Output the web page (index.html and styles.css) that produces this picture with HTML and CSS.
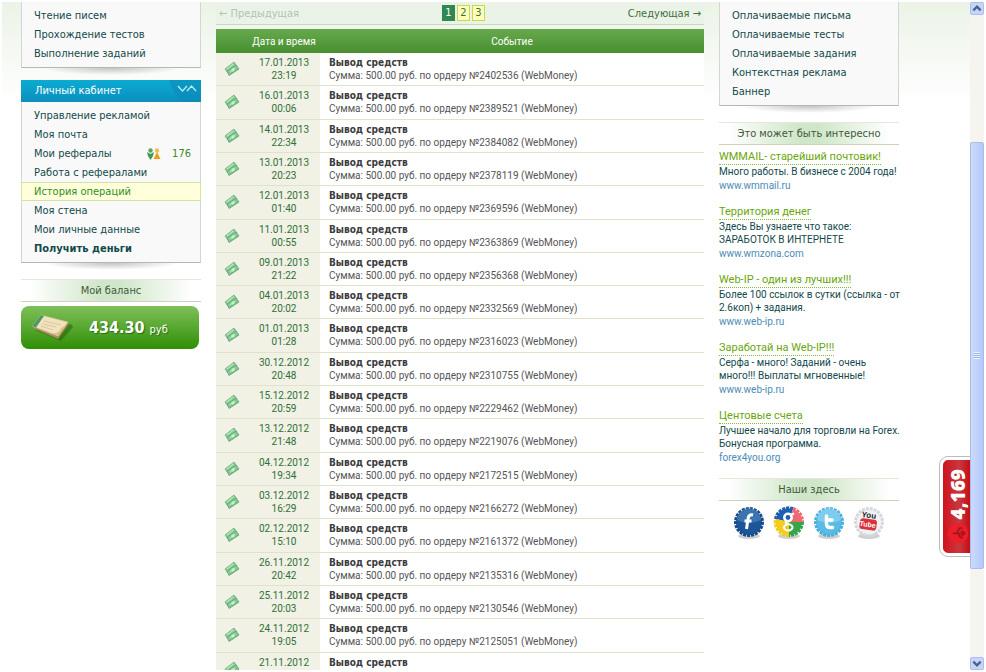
FILE: index.html
```
<!DOCTYPE html>
<html lang="ru">
<head>
    <meta charset="UTF-8">
    <meta name="viewport" content="width=device-width, initial-scale=1.0">
    <title>История операций</title>
    <link rel="stylesheet" href="styles.css">
</head>
<body>
    <svg class="sprite" aria-hidden="true">
        <symbol id="money" viewBox="0 0 16 16">
            <path d="M1 8 L10 1 L13 5 L4 12 Z" fill="#8fd09b" stroke="#6aae7a" stroke-width=".8"/>
            <path d="M3 10 L12 4 L15 8 L5 14.500 Z" fill="#86ca93" stroke="#5c9f6c" stroke-width=".8"/>
            <path d="M3 8 L9 3 M6 11 L11 7" stroke="#c6edca" stroke-width="1"/>
            <circle cx="9" cy="9" r="1.700" fill="#c9efcb"/>
            <path d="M6 13 L14 8" stroke="#6db47e" stroke-width=".8"/>
        </symbol>
    </svg>
    <div class="window">
        <div class="page">
            <nav class="column">
                <ul class="menu">
                    <li><a href="#">Чтение писем</a></li>
                    <li><a href="#">Прохождение тестов</a></li>
                    <li><a href="#">Выполнение заданий</a></li>
                </ul>
                <h2 class="menu-title">Личный кабинет
                    <svg class="menu-arrows" viewBox="0 0 32 22">
                        <path d="M0 0 H32 V22 H16 Q4 16 0 0 Z" fill="#0a87b4" opacity=".5"/>
                        <path d="M9 6 L13.500 11 L18 6 M18 11 L22.500 6 L27 11" fill="none" stroke="#b9ecf8" stroke-width="1.300"/>
                    </svg>
                </h2>
                <ul class="menu">
                    <li><a href="#">Управление рекламой</a></li>
                    <li><a href="#">Моя почта</a></li>
                    <li><a href="#">Мои рефералы</a>
                        <span class="referrals">
                            <svg viewBox="0 0 14 12" width="14" height="12">
                                <circle cx="3.500" cy="2.500" r="2.200" fill="#58a765"/>
                                <path d="M0 4 L3.500 6 L7 4 L6 8 L3.500 12 L1 8 Z" fill="#3e9a55"/>
                                <circle cx="10" cy="2.500" r="2.200" fill="#f3bd55"/>
                                <path d="M10 4 L13.500 11 H6.500 Z" fill="#f39a1d"/>
                            </svg>
                            176
                        </span>
                    </li>
                    <li><a href="#">Работа с рефералами</a></li>
                    <li class="active"><a href="#">История операций</a></li>
                    <li><a href="#">Моя стена</a></li>
                    <li><a href="#">Мои личные данные</a></li>
                    <li><a href="#"><b>Получить деньги</b></a></li>
                </ul>
                <h3 class="heading">Мой баланс</h3>
                <div class="balance">
                    <svg viewBox="0 0 42 30" width="42" height="30">
                        <path d="M4 17 L30 28 L42 14 L40 11 Z" fill="#235c08" opacity=".5"/>
                        <path d="M2 15 L27 26 L37 12 L37 9 L12 3 Z" fill="#a98f5c"/>
                        <path d="M1 13 L27 23 L37 9 L10 2 Z" fill="#efe2bd" stroke="#cfbd8a" stroke-width=".6"/>
                        <path d="M1 13 L5 14.500 L13 3 L10 2 Z" fill="#4c9b62"/>
                        <path d="M13 8 L30 12 M12 11 L25 14 M10 13 L22 17" stroke="#cdbd93" stroke-width=".7"/>
                        <path d="M21 20.500 Q29 20 30 15 L35 12 L27 23 Z" fill="#d9c289"/>
                    </svg>
                    <span class="sum">434.30 <small>руб</small></span>
                </div>
            </nav>

            <main>
                <div class="pager">
                    <span class="prev">← Предыдущая</span>
                    <div class="pages">
                        <a class="current" href="#">1</a>
                        <a href="#">2</a>
                        <a href="#">3</a>
                    </div>
                    <a href="#">Следующая →</a>
                </div>
                <table class="history">
                    <thead>
                        <tr><th class="icon"></th><th class="date">Дата и время</th><th>Событие</th></tr>
                    </thead>
                    <tbody>
                        <tr><td class="icon"><svg><use href="#money"/></svg></td><td class="date">17.01.2013<br>23:19</td><td class="event"><b>Вывод средств</b><br>Сумма: 500.00 руб. по ордеру №2402536 (WebMoney)</td></tr>
                        <tr><td class="icon"><svg><use href="#money"/></svg></td><td class="date">16.01.2013<br>00:06</td><td class="event"><b>Вывод средств</b><br>Сумма: 500.00 руб. по ордеру №2389521 (WebMoney)</td></tr>
                        <tr><td class="icon"><svg><use href="#money"/></svg></td><td class="date">14.01.2013<br>22:34</td><td class="event"><b>Вывод средств</b><br>Сумма: 500.00 руб. по ордеру №2384082 (WebMoney)</td></tr>
                        <tr><td class="icon"><svg><use href="#money"/></svg></td><td class="date">13.01.2013<br>20:23</td><td class="event"><b>Вывод средств</b><br>Сумма: 500.00 руб. по ордеру №2378119 (WebMoney)</td></tr>
                        <tr><td class="icon"><svg><use href="#money"/></svg></td><td class="date">12.01.2013<br>01:40</td><td class="event"><b>Вывод средств</b><br>Сумма: 500.00 руб. по ордеру №2369596 (WebMoney)</td></tr>
                        <tr><td class="icon"><svg><use href="#money"/></svg></td><td class="date">11.01.2013<br>00:55</td><td class="event"><b>Вывод средств</b><br>Сумма: 500.00 руб. по ордеру №2363869 (WebMoney)</td></tr>
                        <tr><td class="icon"><svg><use href="#money"/></svg></td><td class="date">09.01.2013<br>21:22</td><td class="event"><b>Вывод средств</b><br>Сумма: 500.00 руб. по ордеру №2356368 (WebMoney)</td></tr>
                        <tr><td class="icon"><svg><use href="#money"/></svg></td><td class="date">04.01.2013<br>20:02</td><td class="event"><b>Вывод средств</b><br>Сумма: 500.00 руб. по ордеру №2332569 (WebMoney)</td></tr>
                        <tr><td class="icon"><svg><use href="#money"/></svg></td><td class="date">01.01.2013<br>01:28</td><td class="event"><b>Вывод средств</b><br>Сумма: 500.00 руб. по ордеру №2316023 (WebMoney)</td></tr>
                        <tr><td class="icon"><svg><use href="#money"/></svg></td><td class="date">30.12.2012<br>20:48</td><td class="event"><b>Вывод средств</b><br>Сумма: 500.00 руб. по ордеру №2310755 (WebMoney)</td></tr>
                        <tr><td class="icon"><svg><use href="#money"/></svg></td><td class="date">15.12.2012<br>20:59</td><td class="event"><b>Вывод средств</b><br>Сумма: 500.00 руб. по ордеру №2229462 (WebMoney)</td></tr>
                        <tr><td class="icon"><svg><use href="#money"/></svg></td><td class="date">13.12.2012<br>21:48</td><td class="event"><b>Вывод средств</b><br>Сумма: 500.00 руб. по ордеру №2219076 (WebMoney)</td></tr>
                        <tr><td class="icon"><svg><use href="#money"/></svg></td><td class="date">04.12.2012<br>19:34</td><td class="event"><b>Вывод средств</b><br>Сумма: 500.00 руб. по ордеру №2172515 (WebMoney)</td></tr>
                        <tr><td class="icon"><svg><use href="#money"/></svg></td><td class="date">03.12.2012<br>16:29</td><td class="event"><b>Вывод средств</b><br>Сумма: 500.00 руб. по ордеру №2166272 (WebMoney)</td></tr>
                        <tr><td class="icon"><svg><use href="#money"/></svg></td><td class="date">02.12.2012<br>15:10</td><td class="event"><b>Вывод средств</b><br>Сумма: 500.00 руб. по ордеру №2161372 (WebMoney)</td></tr>
                        <tr><td class="icon"><svg><use href="#money"/></svg></td><td class="date">26.11.2012<br>20:42</td><td class="event"><b>Вывод средств</b><br>Сумма: 500.00 руб. по ордеру №2135316 (WebMoney)</td></tr>
                        <tr><td class="icon"><svg><use href="#money"/></svg></td><td class="date">25.11.2012<br>20:03</td><td class="event"><b>Вывод средств</b><br>Сумма: 500.00 руб. по ордеру №2130546 (WebMoney)</td></tr>
                        <tr><td class="icon"><svg><use href="#money"/></svg></td><td class="date">24.11.2012<br>19:05</td><td class="event"><b>Вывод средств</b><br>Сумма: 500.00 руб. по ордеру №2125051 (WebMoney)</td></tr>
                        <tr><td class="icon"><svg><use href="#money"/></svg></td><td class="date">21.11.2012</td><td class="event"><b>Вывод средств</b></td></tr>
                    </tbody>
                </table>
            </main>

            <aside class="column">
                <ul class="menu">
                    <li><a href="#">Оплачиваемые письма</a></li>
                    <li><a href="#">Оплачиваемые тесты</a></li>
                    <li><a href="#">Оплачиваемые задания</a></li>
                    <li><a href="#">Контекстная реклама</a></li>
                    <li><a href="#">Баннер</a></li>
                </ul>
                <h3 class="heading">Это может быть интересно</h3>
                <div class="ads">
                    <div class="ad">
                        <a class="ad-title" href="#">WMMAIL- старейший почтовик!</a>
                        <p>Много работы. В бизнесе с 2004 года!</p>
                        <a class="ad-url" href="#">www.wmmail.ru</a>
                    </div>
                    <div class="ad">
                        <a class="ad-title" href="#">Территория денег</a>
                        <p>Здесь Вы узнаете что такое:<br>ЗАРАБОТОК В ИНТЕРНЕТЕ</p>
                        <a class="ad-url" href="#">www.wmzona.com</a>
                    </div>
                    <div class="ad">
                        <a class="ad-title" href="#">Web-IP - один из лучших!!!</a>
                        <p>Более 100 ссылок в сутки (ссылка - от<br>2.6коп) + задания.</p>
                        <a class="ad-url" href="#">www.web-ip.ru</a>
                    </div>
                    <div class="ad">
                        <a class="ad-title" href="#">Заработай на Web-IP!!!</a>
                        <p>Серфа - много! Заданий - очень<br>много!!! Выплаты мгновенные!</p>
                        <a class="ad-url" href="#">www.web-ip.ru</a>
                    </div>
                    <div class="ad">
                        <a class="ad-title" href="#">Центовые счета</a>
                        <p>Лучшее начало для торговли на Forex.<br>Бонусная программа.</p>
                        <a class="ad-url" href="#">forex4you.org</a>
                    </div>
                </div>
                <h3 class="heading">Наши здесь</h3>
                <div class="social">
                    <a href="#" aria-label="Facebook"><svg viewBox="0 0 32 34">
                        <ellipse cx="16" cy="30" rx="11" ry="3" fill="#bbb" opacity=".7"/>
                        <circle cx="16" cy="16" r="13" fill="#1c5699"/>
                        <circle class="teeth" cx="16" cy="16" r="13.500" stroke="#174a89"/>
                        <path d="M4 14 A12 12 0 0 1 28 14 Q16 20 4 14 Z" fill="#5b92c9" opacity=".5"/>
                        <path d="M20 9 Q15.500 8 15 13 L13.500 23 M11.500 15 H18.500" fill="none" stroke="#fff" stroke-width="3"/>
                    </svg></a>
                    <a href="#" aria-label="Google"><svg viewBox="0 0 32 34">
                        <ellipse cx="16" cy="30" rx="11" ry="3" fill="#bbb" opacity=".7"/>
                        <path d="M16 16 L3 13 A13 13 0 0 1 20 3 Z" fill="#1d5fb0"/>
                        <path d="M16 16 L20 3 A13 13 0 0 1 29 16 Z" fill="#ee6a73"/>
                        <path d="M16 16 L29 16 A13 13 0 0 1 16 29 Z" fill="#35a548"/>
                        <path d="M16 16 L16 29 A13 13 0 0 1 3 13 Z" fill="#f6cc1b"/>
                        <path class="teeth" d="M2.500 13 A13.500 13.500 0 0 1 20 2.500" stroke="#1d5fb0"/>
                        <path class="teeth" d="M20 2.500 A13.500 13.500 0 0 1 29.500 16" stroke="#ee6a73"/>
                        <path class="teeth" d="M29.500 16 A13.500 13.500 0 0 1 16 29.500" stroke="#35a548"/>
                        <path class="teeth" d="M16 29.500 A13.500 13.500 0 0 1 2.500 13" stroke="#f6cc1b"/>
                        <circle cx="15" cy="11.500" r="3.700" fill="none" stroke="#fff" stroke-width="2.500"/>
                        <path d="M17 9 L21 7.500 M14 15 Q11 17 15 18 Q20 19 19.500 22 Q18 25 14 24.500 Q9.500 23 11.500 20 Q13 18.500 15 18" fill="none" stroke="#fff" stroke-width="2"/>
                    </svg></a>
                    <a href="#" aria-label="Twitter"><svg viewBox="0 0 32 34">
                        <ellipse cx="16" cy="30" rx="11" ry="3" fill="#bbb" opacity=".7"/>
                        <circle cx="16" cy="16" r="13" fill="#58bce6"/>
                        <circle class="teeth" cx="16" cy="16" r="13.500" stroke="#49aedb"/>
                        <path d="M4 14 A12 12 0 0 1 28 14 Q16 20 4 14 Z" fill="#a5def5" opacity=".5"/>
                        <path d="M13.500 10 V18 Q13.500 21.500 17 21.500 H19.500 M13.500 14 H19" fill="none" stroke="#fff" stroke-width="3.500" stroke-linecap="round"/>
                    </svg></a>
                    <a href="#" aria-label="YouTube"><svg viewBox="0 0 32 34">
                        <ellipse cx="16" cy="30" rx="11" ry="3" fill="#bbb" opacity=".7"/>
                        <circle cx="16" cy="16" r="13" fill="#f1f2f5"/>
                        <circle class="teeth" cx="16" cy="16" r="13.500" stroke="#d5d8de"/>
                        <g transform="rotate(8 16 16)">
                            <text class="you" x="15" y="12" font-size="8">You</text>
                            <rect x="7" y="13" width="17" height="11" rx="3" fill="#d8323a"/>
                            <text x="15" y="21" font-size="7">Tube</text>
                        </g>
                    </svg></a>
                </div>
            </aside>

            <a class="counter" href="#">
                <svg viewBox="0 0 24 24" width="22" height="22">
                    <circle cx="12" cy="12" r="12" fill="#ea1f2a"/>
                    <path d="M6 12 H19 M10 12 L14 6 H17 M12 12 L15 17 H18 M16 9 L20 12 L16 15" fill="none" stroke="#a8141b" stroke-width="2"/>
                </svg>
                <span>4,169</span>
            </a>
        </div>

        <div class="scrollbar">
            <button class="scroll-button" aria-label="Вверх"><svg viewBox="0 0 12 12"><path d="M2 8 L6 4 L10 8" fill="none" stroke="#4d6185" stroke-width="2.500"/></svg></button>
            <div class="track"><div class="thumb"><i></i></div></div>
            <button class="scroll-button" aria-label="Вниз"><svg viewBox="0 0 12 12"><path d="M2 4 L6 8 L10 4" fill="none" stroke="#4d6185" stroke-width="2.500"/></svg></button>
        </div>
    </div>
</body>
</html>
```
FILE: styles.css
```
* { box-sizing: border-box; }
body { margin: 0; background: #fff; font-family: "DejaVu Sans Condensed", "DejaVu Sans", sans-serif; font-size: 11px; color: #12494a; }
a { color: inherit; text-decoration: none; }
ul, p, h2, h3 { margin: 0; padding: 0; list-style: none; font-weight: normal; font-size: 11px; }
.sprite { display: none; }

.window { display: flex; height: 100vh; padding: 2px; overflow: hidden; }
.page { position: relative; flex: 1; min-width: 0; overflow: hidden; display: grid; grid-template-columns: 180px 1fr 180px; align-items: start; gap: 15px; padding: 0 71px 0 19px; background: linear-gradient(#ebf3e6, #fff 100px); }

.menu { padding: 4px 0; background: #f9f9f9; border: 1px solid #d3d6d3; border-top: none; border-bottom-color: #b4b8b4; position: relative; }
.menu::after { content: ""; position: absolute; left: 20px; right: 20px; top: 100%; height: 7px; margin-top: 1px; background: radial-gradient(ellipse at top, #c4c4c4, transparent 70%); }
.menu li { display: flex; align-items: center; height: 19px; padding: 0 9px 0 12px; line-height: 19px; }
.menu .active { margin: 0 -1px; background: #ffffdc; border: 1px solid #d3e3a4; color: #2f8f20; line-height: 17px; }
.referrals { display: flex; align-items: center; gap: 11px; margin-left: auto; color: #3b8e26; }
.menu-title { display: flex; justify-content: space-between; height: 22px; margin-top: 12px; padding-left: 14px; line-height: 22px; color: #fff; background: linear-gradient(#0babd2, #0b8fbd); }
.menu-arrows { width: 32px; height: 22px; }

.heading { height: 23px; margin-top: 16px; line-height: 21px; text-align: center; color: #3e5a3a; border-top: 1px solid #e6e6dc; border-bottom: 1px solid #cfd0bd; background: linear-gradient(90deg, #fff 5%, #cfe6c8 45%, #cfe6c8 55%, #fff 95%); }
.balance { display: flex; align-items: center; gap: 16px; height: 43px; margin: 4px 2px 0 0; padding-left: 10px; border-radius: 8px; background: linear-gradient(#7fc05a, #2f8f05); color: #fff; }
.sum { font-size: 16px; font-weight: bold; text-shadow: 1px 1px 1px #2c6a10; }
.sum small { font-size: 11px; font-weight: normal; }

.pager { display: flex; justify-content: space-between; align-items: center; height: 23px; padding: 0 3px; border-bottom: 1px solid #c5dbbd; color: #3b7139; background: #ebf3e8; }
.prev { color: #b3c4b0; }
.pages { display: flex; gap: 2px; }
.pages a { width: 13px; height: 16px; line-height: 14px; text-align: center; border: 1px solid #c9d94f; background: #fbffb9; }
.pages .current { background: #2f8853; border-color: #2f8853; color: #fff; }

.history { width: 100%; height: 655px; margin-top: 4px; border-collapse: collapse; font-family: Roboto, "Noto Sans", sans-serif; font-size: 10px; line-height: 13px; color: #555; }
.history th { height: 24px; padding: 0; font-weight: normal; color: #fff; background: linear-gradient(#66a94c, #488f30); }
.history td { padding: 3px 0; vertical-align: top; border-bottom: 1px solid #dfe3cb; background: #fff; }
.history .icon { width: 32px; text-align: center; }
.history .icon svg { width: 16px; height: 16px; margin-top: 5px; }
.history .date { width: 72px; text-align: center; }
.history td.icon, .history td.date { background: #f1f1e6; color: #2e7035; }
.history td.event { padding-left: 9px; }
.event b { font-family: "DejaVu Sans Condensed", "DejaVu Sans", sans-serif; color: #3c3c3c; }

.ads { display: grid; gap: 11px; margin: 5px 0 -4px; }
.ad { display: flex; flex-direction: column; align-items: flex-start; font-family: Roboto, "Noto Sans", sans-serif; font-size: 10px; line-height: 13px; white-space: nowrap; color: #12494a; }
.ad p { font-size: 10px; }
.ad-title { font-size: 11px; line-height: 14px; border-bottom: 1px dotted #85bb32; color: #69a70c; }
.ad-url { line-height: 16px; color: #4b8cb5; }
.social { display: flex; justify-content: space-between; margin-top: 5px; padding: 0 14px; }
.social svg { display: block; width: 32px; height: 34px; }
.social text { fill: #fff; font-family: "Liberation Sans", sans-serif; font-weight: bold; text-anchor: middle; }
.social .you { fill: #222; }
.teeth { fill: none; stroke-width: 3; stroke-dasharray: 3 1; }

.counter { position: absolute; right: 0; top: 455px; display: flex; flex-direction: column-reverse; align-items: center; gap: 4px; width: 30px; height: 99px; padding: 9px 0 9px 3px; border: 3px solid #fff; border-right: none; border-radius: 8px 0 0 8px; outline: 1px solid #bbb; color: #fff; background: linear-gradient(90deg, #d0121b, #c8393f 60%, #c40d15); }
.counter span { writing-mode: vertical-rl; transform: rotate(180deg); font-family: "Open Sans", sans-serif; font-size: 19px; line-height: 24px; font-weight: 800; }

.scrollbar { display: flex; flex-direction: column; width: 14px; background: #f5f4ee; }
.scroll-button { height: 13px; padding: 0; border: 1px solid #aabff0; border-radius: 2px; background: #c6d5fb; }
.scroll-button svg { display: block; width: 12px; height: 11px; }
.track { flex: 1; padding: 127px 0 88px; }
.thumb { display: flex; align-items: center; justify-content: center; height: 100%; border: 1px solid #a9bdec; border-radius: 2px; background: linear-gradient(90deg, #cbdafd, #b5c8f8); }
.thumb i { width: 6px; height: 7px; background: repeating-linear-gradient(#eef4fe 0 1px, #9cb3e8 1px 2px); }
```
